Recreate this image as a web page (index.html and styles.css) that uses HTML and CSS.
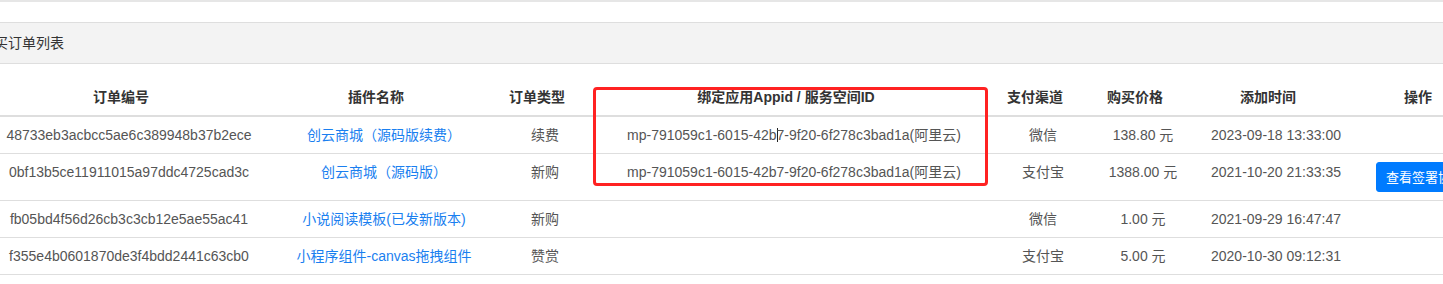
FILE: index.html
```html
<!DOCTYPE html>
<html lang="zh-CN">
<head>
<meta charset="utf-8">
<title>购买订单列表</title>
<link rel="stylesheet" href="styles.css">
</head>
<body>
<div class="topbar"></div>
<div class="card">
  <div class="card-header">购买订单列表</div>
  <div class="card-body">
    <table class="orders">
      <colgroup>
        <col class="c1"><col class="c2"><col class="c3"><col class="c4"><col class="c5"><col class="c6"><col class="c7"><col class="c8">
      </colgroup>
      <thead>
        <tr>
          <th>订单编号</th><th>插件名称</th><th>订单类型</th><th>绑定应用Appid / 服务空间ID</th><th>支付渠道</th><th>购买价格</th><th>添加时间</th><th>操作</th>
        </tr>
      </thead>
      <tbody>
        <tr>
          <td>48733eb3acbcc5ae6c389948b37b2ece</td>
          <td><a class="link" href="#">创云商城（源码版续费）</a></td>
          <td>续费</td>
          <td>mp-791059c1-6015-42b<span class="caret"></span>7-9f20-6f278c3bad1a(阿里云)</td>
          <td>微信</td>
          <td>138.80 元</td>
          <td>2023-09-18 13:33:00</td>
          <td class="op"></td>
        </tr>
        <tr>
          <td>0bf13b5ce11911015a97ddc4725cad3c</td>
          <td><a class="link" href="#">创云商城（源码版）</a></td>
          <td>新购</td>
          <td>mp-791059c1-6015-42b7-9f20-6f278c3bad1a(阿里云)</td>
          <td>支付宝</td>
          <td>1388.00 元</td>
          <td>2021-10-20 21:33:35</td>
          <td class="op"><a class="btn" href="#">查看签署协议</a></td>
        </tr>
        <tr>
          <td>fb05bd4f56d26cb3c3cb12e5ae55ac41</td>
          <td><a class="link" href="#">小说阅读模板(已发新版本)</a></td>
          <td>新购</td>
          <td></td>
          <td>微信</td>
          <td>1.00 元</td>
          <td>2021-09-29 16:47:47</td>
          <td class="op"></td>
        </tr>
        <tr>
          <td>f355e4b0601870de3f4bdd2441c63cb0</td>
          <td><a class="link" href="#">小程序组件-canvas拖拽组件</a></td>
          <td>赞赏</td>
          <td></td>
          <td>支付宝</td>
          <td>5.00 元</td>
          <td>2020-10-30 09:12:31</td>
          <td class="op"></td>
        </tr>
      </tbody>
    </table>
  </div>
</div>
<div class="highlight"></div>
</body>
</html>
```

FILE: styles.css
```css
html, body {
  margin: 0;
  padding: 0;
  background: #fff;
  overflow: hidden;
}
body {
  font-family: "Liberation Sans", "Noto Sans CJK SC", Arial, sans-serif;
  font-size: 14px;
  line-height: 20px;
  color: #555;
  width: 1443px;
  height: 284px;
}
.topbar {
  height: 2px;
  background: #e6e6e6;
}
.card {
  margin-top: 20px;
  margin-left: -40px;
  width: 1600px;
  border: 1px solid #dedede;
  border-right: none;
  background: #fff;
}
.card-header {
  background: #f3f3f3;
  border-bottom: 1px solid #dedede;
  padding: 10px 19px;
  height: 20px;
  color: #333;
}
.card-body {
  padding: 15px 0 0 30px;
}
.orders {
  table-layout: fixed;
  width: 1508px;
  border-collapse: collapse;
}
.c1 { width: 276px; }
.c2 { width: 234px; }
.c3 { width: 88px; }
.c4 { width: 410px; }
.c5 { width: 88px; }
.c6 { width: 112px; }
.c7 { width: 154px; }
.c8 { width: 146px; }
.orders th {
  font-weight: bold;
  color: #333;
  text-align: center;
  vertical-align: bottom;
  padding: 8px 24px 8px 8px;
  border-bottom: 2px solid #dedede;
  white-space: nowrap;
}
.orders td {
  text-align: center;
  vertical-align: top;
  padding: 8px 0;
  border-top: 1px solid #dedede;
  white-space: nowrap;
}
.orders td.op {
  text-align: left;
  padding-left: 23px;
}
.link {
  color: #1a7ff0;
  text-decoration: none;
}
.caret {
  display: inline-block;
  width: 0;
  height: 14px;
  border-left: 1px solid #222;
  margin-right: -1px;
  vertical-align: -2px;
}
.btn {
  display: inline-block;
  box-sizing: border-box;
  height: 30px;
  padding: 5px 9px 4px;
  line-height: 19px;
  border: 1px solid #007bff;
  border-radius: 3px;
  background: #007bff;
  color: #fff;
  text-decoration: none;
  vertical-align: top;
  font-size: 13px;
}
.highlight {
  position: absolute;
  left: 593px;
  top: 87px;
  width: 389px;
  height: 93px;
  border: 3px solid #ff2222;
  border-radius: 4px;
}
```
